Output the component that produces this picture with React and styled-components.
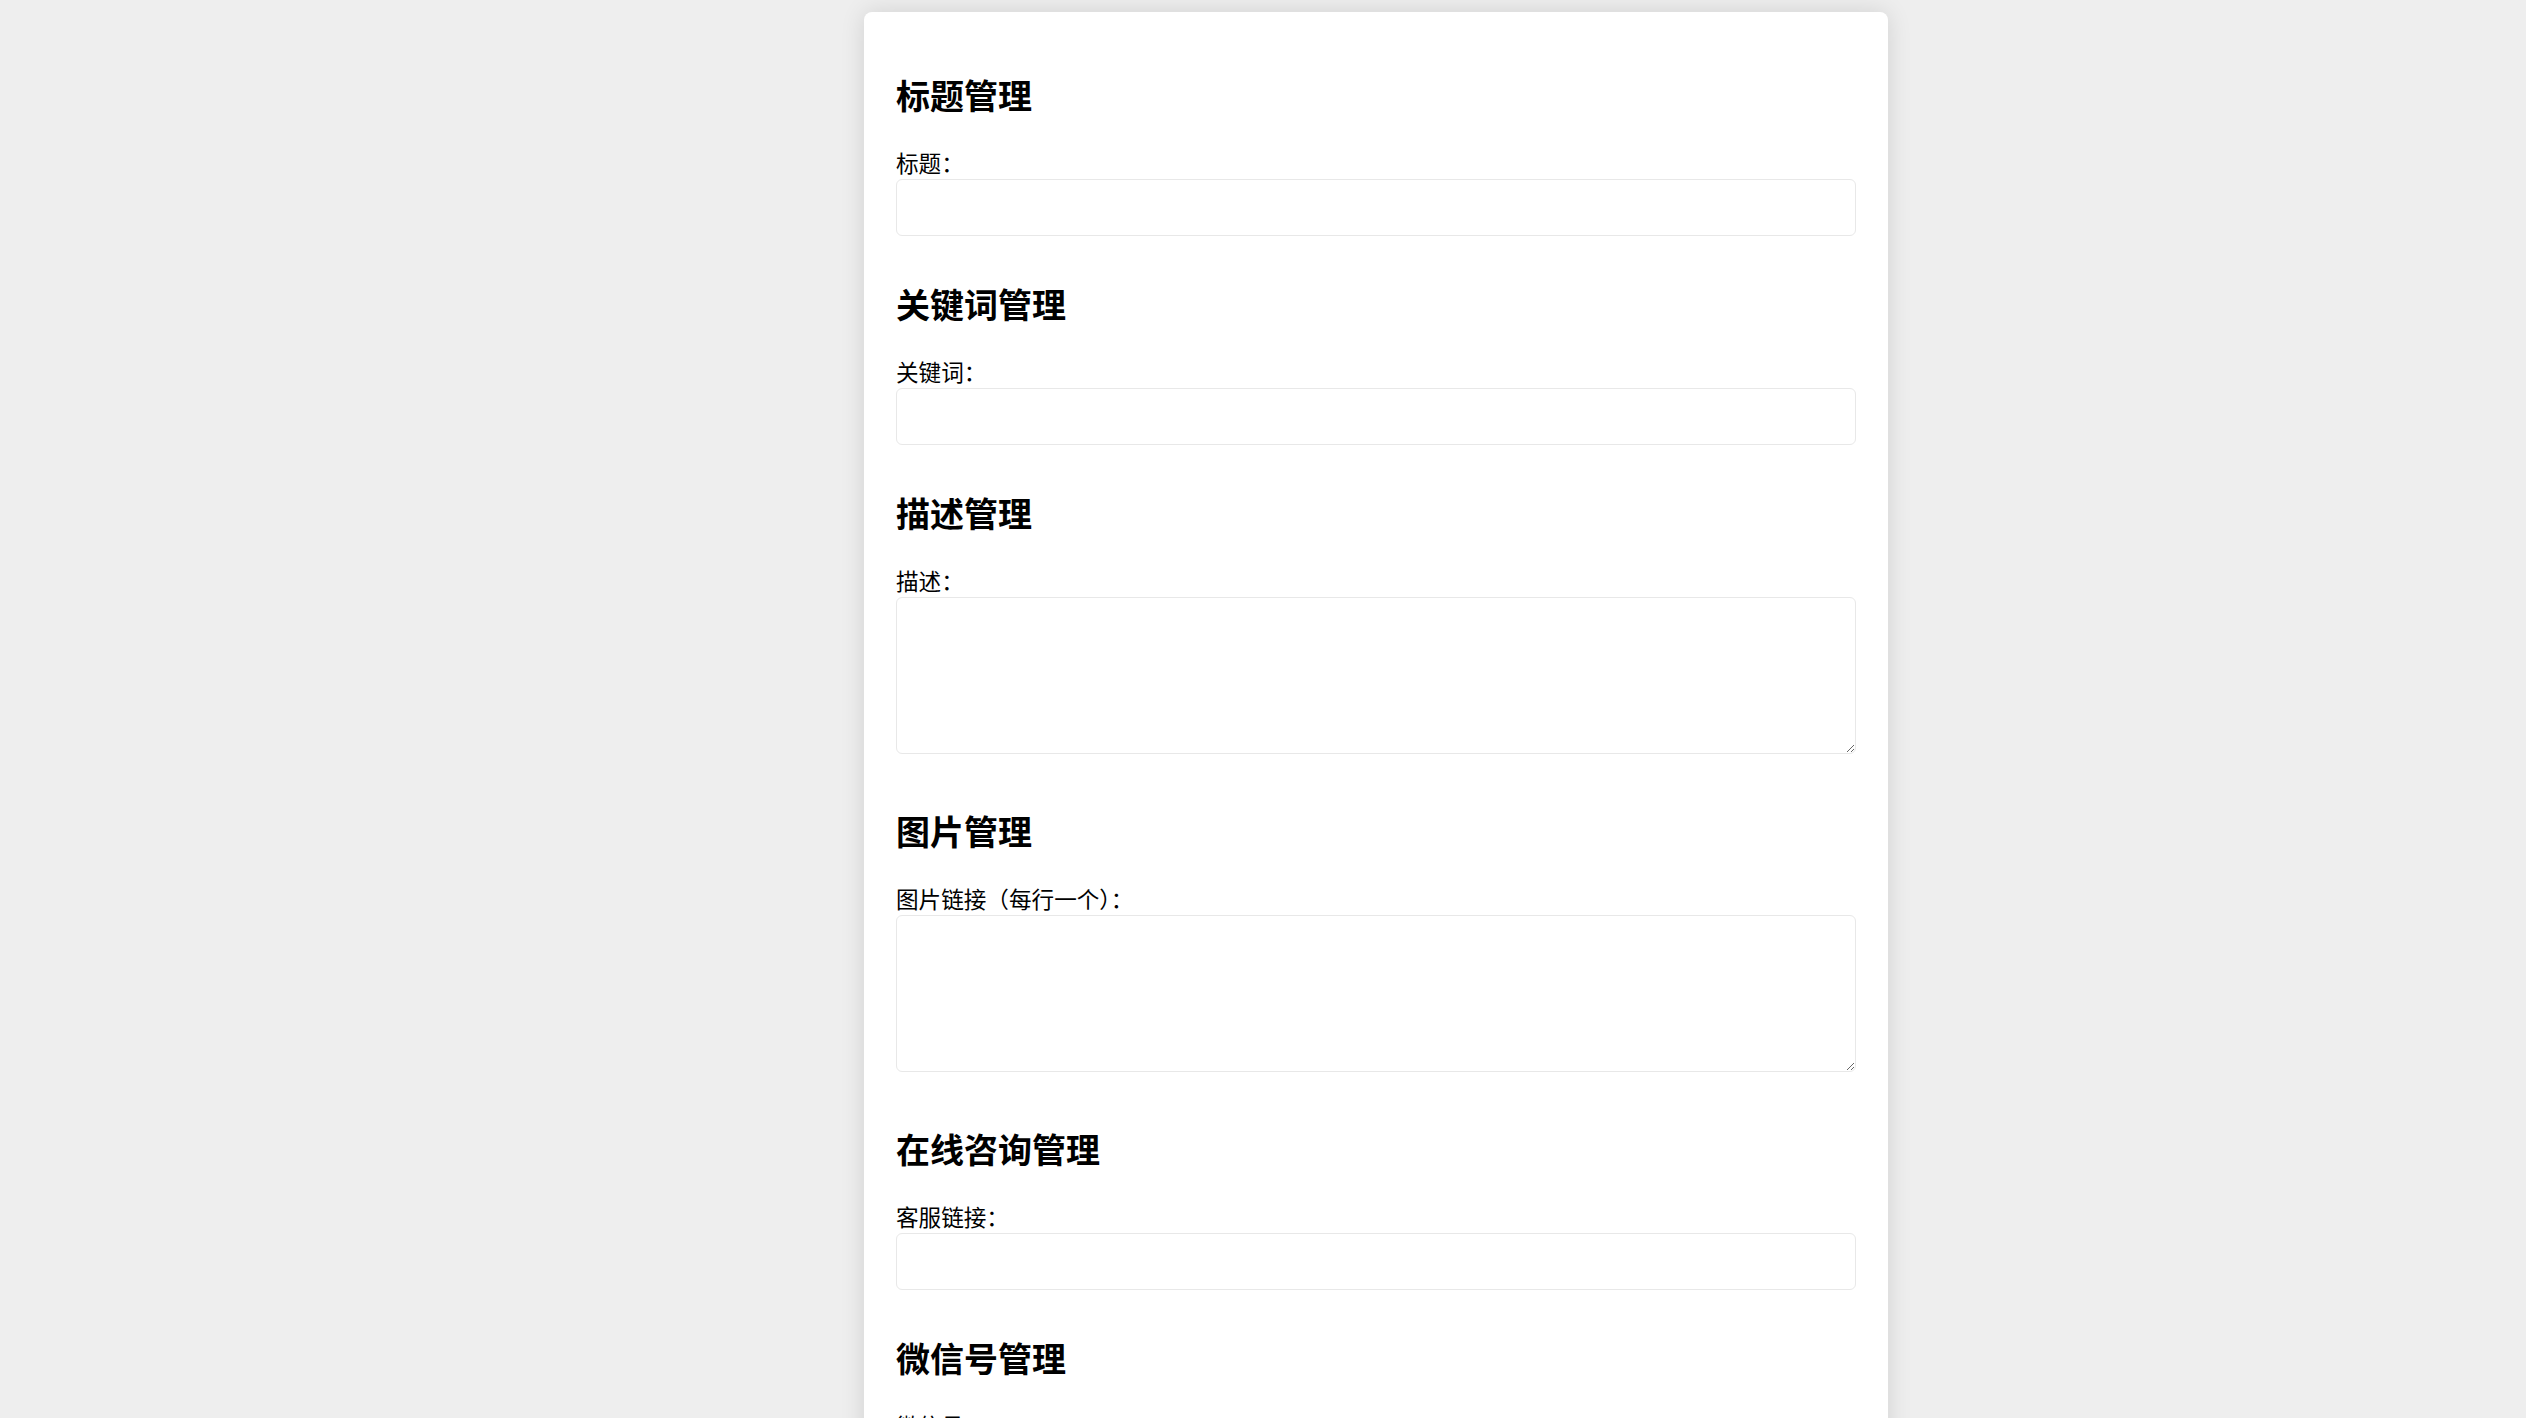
import React from "react";
import styled, { createGlobalStyle } from "styled-components";

const GlobalStyle = createGlobalStyle`
  html, body {
    margin: 0;
    padding: 0;
    background: #eeeeee;
  }
  body {
    font-family: "Noto Sans CJK SC", "Noto Sans", sans-serif;
    color: #000;
  }
  * {
    box-sizing: border-box;
  }
`;

const sections = [
  { title: "标题管理", label: "标题：", multi: false },
  { title: "关键词管理", label: "关键词：", multi: false },
  { title: "描述管理", label: "描述：", multi: true },
  { title: "图片管理", label: "图片链接（每行一个）：", multi: true },
  { title: "在线咨询管理", label: "客服链接：", multi: false },
  { title: "微信号管理", label: "微信号：", multi: false },
  { title: "电话管理", label: "电话：", multi: false },
];

export default function App() {
  return (
    <>
      <GlobalStyle />
      <Page>
        <Card>
          {sections.map((s) => (
            <Section key={s.title}>
              <Heading>{s.title}</Heading>
              <Label>{s.label}</Label>
              {s.multi ? <TextArea /> : <Input type="text" />}
            </Section>
          ))}
        </Card>
      </Page>
    </>
  );
}

const Page = styled.div`
  display: flex;
  justify-content: flex-start;
  padding: 12px 0 40px 864px;
  min-height: 100vh;
`;

const Card = styled.div`
  width: 1024px;
  background: #fff;
  border-radius: 8px;
  box-shadow: 0 0 24px rgba(0, 0, 0, 0.12);
  padding: 15px 32px 48px;
`;

const Section = styled.div`
  display: flex;
  flex-direction: column;
  padding-top: 48px;
`;

const Heading = styled.h2`
  margin: 0 0 34px;
  font-size: 34px;
  line-height: 40px;
  font-weight: 700;
`;

const Label = styled.label`
  display: block;
  font-size: 22.6px;
  line-height: 28px;
  margin-bottom: 2px;
`;

const Input = styled.input`
  display: block;
  width: 100%;
  height: 57px;
  border: 1px solid #e8e8e8;
  border-radius: 6px;
  background: #fff;
  font-family: inherit;
  font-size: 23px;
  padding: 0 14px;
  outline: none;
`;

const TextArea = styled.textarea`
  display: block;
  width: 100%;
  height: 157px;
  border: 1px solid #e8e8e8;
  border-radius: 6px;
  background: #fff;
  font-family: inherit;
  font-size: 23px;
  padding: 10px 14px;
  margin-bottom: 9px;
  outline: none;
  resize: vertical;
`;
